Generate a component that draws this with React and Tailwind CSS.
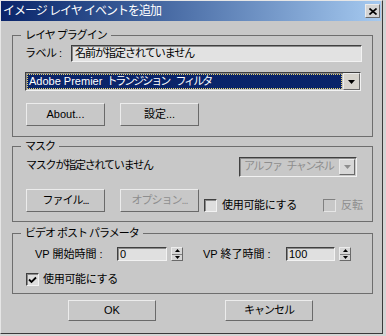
import React from 'react';

const raised =
  'border border-t-[#ececec] border-l-[#ececec] border-b-[#6a6a6a] border-r-[#6a6a6a]';
const sunken =
  'border border-t-[#404040] border-l-[#404040] border-b-[#f2f2f2] border-r-[#f2f2f2] shadow-[inset_1px_1px_0_#8a8a8a]';

const Group = ({ title, className = '', children }) => (
  <div className={`relative border border-[#6e6e6e] ${className}`}>
    <span className="absolute left-[8px] top-[-8px] h-[14px] bg-[#c8c8c8] pl-[4px] pr-[4px] text-[11px] leading-[14px] tracking-[-1px] whitespace-nowrap">
      {title}
    </span>
    {children}
  </div>
);

const Button = ({ children, disabled, className = '' }) => (
  <div
    className={`flex items-center justify-center bg-[#c8c8c8] text-[11px] ${raised} ${
      disabled ? 'text-[#8e8e8e]' : 'text-black'
    } ${className}`}
  >
    {children}
  </div>
);

const Arrow = ({ color = '#000' }) => (
  <svg width="7" height="4" viewBox="0 0 7 4">
    <path d="M0 0h7L3.5 4z" fill={color} />
  </svg>
);

const Check = ({ checked, disabled }) => (
  <span
    className={`flex h-[13px] w-[13px] shrink-0 items-center justify-center border ${
      disabled
        ? 'border-t-[#808080] border-l-[#808080] border-b-[#e6e6e6] border-r-[#e6e6e6] bg-[#c8c8c8]'
        : 'border-t-[#404040] border-l-[#404040] border-b-[#f2f2f2] border-r-[#f2f2f2] bg-[#dedede] shadow-[inset_1px_1px_0_#8a8a8a]'
    }`}
  >
    {checked && (
      <svg width="9" height="8" viewBox="0 0 9 8">
        <path d="M1 3.5l2.5 2.5L8 1.5" fill="none" stroke="#000" strokeWidth="1.8" />
      </svg>
    )}
  </span>
);

const Spinner = () => (
  <div className={`flex h-[14px] w-[12px] shrink-0 flex-col bg-[#d6d6d6] ${raised}`}>
    <div className="flex flex-1 items-center justify-center border-b border-[#808080]">
      <svg width="5" height="3" viewBox="0 0 5 3">
        <path d="M2.5 0L5 3H0z" fill="#000" />
      </svg>
    </div>
    <div className="flex flex-1 items-center justify-center">
      <svg width="5" height="3" viewBox="0 0 5 3">
        <path d="M0 0h5L2.5 3z" fill="#000" />
      </svg>
    </div>
  </div>
);

const NumField = ({ value, width }) => (
  <div className={`h-[14px] bg-[#e0e0e0] pl-[2px] text-[11px] leading-[12px] ${sunken} ${width}`}>
    {value}
  </div>
);

export default function App() {
  return (
    <div className="h-[336px] w-[386px] bg-[#d4d4d4] font-['Liberation_Sans','Noto_Sans_CJK_JP',sans-serif] text-black">
      <div className="h-[334px] w-[383px] border border-t-[#e6e6e6] border-l-[#e6e6e6] border-b-[#3a3a3a] border-r-[#3a3a3a] bg-[#c8c8c8]">
        {/* Title bar */}
        <div className="mr-[1px] flex h-[20px] items-center justify-between bg-gradient-to-r from-[#0a246a] to-[#a6caf0] pl-[2px] pr-[1px]">
          <span className="text-[12px] leading-[20px] tracking-[-1px] text-white">イメージ レイヤ イベントを追加</span>
          <div className={`flex h-[14px] w-[15px] items-center justify-center bg-[#d4d4d4] ${raised}`}>
            <svg width="8" height="7" viewBox="0 0 8 7">
              <path d="M0.5 0.5l7 6M7.5 0.5l-7 6" stroke="#000" strokeWidth="1.6" />
            </svg>
          </div>
        </div>

        <div className="pl-[11px]">
          {/* Layer plugin */}
          <Group title="レイヤ プラグイン" className="mt-[14px] h-[102px] w-[361px]">
            <div className="pl-[12px] pt-[9px]">
              <div className="flex items-center">
                <span className="w-[46px] text-[11px] tracking-[-0.5px]">ラベル :</span>
                <div className={`h-[17px] w-[291px] bg-[#e2e2e2] pl-[3px] text-[11px] leading-[15px] tracking-[-1px] ${sunken}`}>
                  名前が指定されていません
                </div>
              </div>
              <div className={`mt-[10px] flex h-[19px] w-[336px] items-stretch bg-[#c8c8c8] ${sunken}`}>
                <div className="m-[1px] flex flex-1 items-center border border-dotted border-[#e6d36a] bg-[#0a246a] pl-[1px] text-[11px] text-white">
                  <span>Adobe Premier</span>
                  <span className="ml-[4px] tracking-[-2px]">トランジション</span>
                  <span className="ml-[6px] tracking-[-2px]">フィルタ</span>
                </div>
                <div className={`flex w-[17px] items-center justify-center bg-[#d6d3cc] ${raised}`}>
                  <Arrow />
                </div>
              </div>
              <div className="mt-[12px] flex gap-[15px] pl-[1px]">
                <Button className="h-[23px] w-[79px]">About...</Button>
                <Button className="h-[23px] w-[79px]">設定...</Button>
              </div>
            </div>
          </Group>

          {/* Mask */}
          <Group title="マスク" className="mt-[9px] h-[76px] w-[361px]">
            <div className="pl-[13px] pt-[10px]">
              <div className="flex items-start">
                <span className="mt-[1px] w-[213px] text-[11px] leading-[14px] tracking-[-1.2px]">
                  マスクが指定されていません
                </span>
                <div className={`flex h-[20px] w-[118px] items-stretch ${sunken}`}>
                  <span className="flex min-w-0 flex-1 overflow-hidden whitespace-nowrap pl-[4px] text-[11px] leading-[17px] tracking-[-1.6px] text-[#8e8e8e]">
                    <span>アルファ</span>
                    <span className="ml-[5px]">チャンネル</span>
                  </span>
                  <div className={`my-[1px] mr-[1px] flex w-[16px] shrink-0 items-center justify-center bg-[#d8d8d8] ${raised}`}>
                    <Arrow color="#8e8e8e" />
                  </div>
                </div>
              </div>
              <div className="mt-[12px] flex items-end">
                <Button className="h-[23px] w-[79px] tracking-[-1px]">ファイル...</Button>
                <Button disabled className="ml-[15px] h-[23px] w-[79px] tracking-[-1px]">
                  オプション...
                </Button>
                <div className="ml-[5px] flex w-[119px] items-center gap-[5px]">
                  <Check />
                  <span className="text-[11px] leading-[13px] tracking-[-0.3px]">使用可能にする</span>
                </div>
                <div className="flex items-center gap-[5px]">
                  <Check disabled />
                  <span className="text-[11px] leading-[13px] text-[#8e8e8e]">反転</span>
                </div>
              </div>
            </div>
          </Group>

          {/* Video post parameters */}
          <Group title="ビデオ ポスト パラメータ" className="mt-[11px] h-[61px] w-[361px]">
            <div className="pl-[13px] pt-[13px]">
              <div className="flex items-center pl-[9px]">
                <span className="w-[82px] text-[11px] leading-[14px] whitespace-nowrap">VP 開始時間 :</span>
                <NumField value="0" width="w-[50px]" />
                <span className="w-[4px]" />
                <Spinner />
                <span className="ml-[20px] w-[83px] text-[11px] leading-[14px] whitespace-nowrap">VP 終了時間 :</span>
                <NumField value="100" width="w-[49px]" />
                <span className="w-[4px]" />
                <Spinner />
              </div>
              <div className="mt-[12px] flex items-center gap-[4px]">
                <Check checked />
                <span className="text-[11px] leading-[13px] tracking-[-0.3px]">使用可能にする</span>
              </div>
            </div>
          </Group>

          {/* Dialog buttons */}
          <div className="mt-[6px] flex gap-[69px] pl-[56px]">
            <Button className="h-[21px] w-[88px]">OK</Button>
            <Button className="h-[21px] w-[88px] tracking-[-1px]">キャンセル</Button>
          </div>
        </div>
      </div>
    </div>
  );
}
